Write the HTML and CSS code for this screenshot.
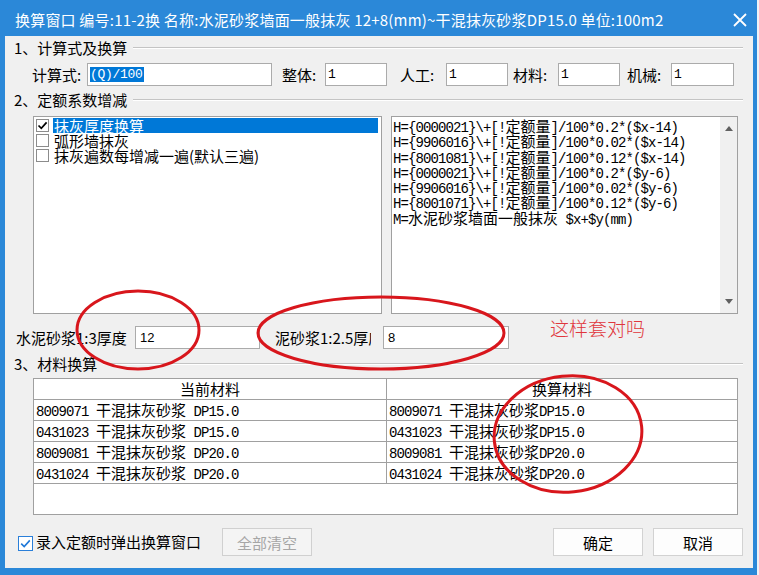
FILE: index.html
```html
<!DOCTYPE html>
<html lang="zh-CN">
<head>
<meta charset="utf-8">
<title>换算窗口</title>
<link rel="stylesheet" href="styles.css">
</head>
<body>
<div class="win">
  <div class="titlebar">
    <span class="title">换算窗口 编号:11-2换 名称:水泥砂浆墙面一般抹灰 12+8(mm)~干混抹灰砂浆DP15.0 单位:100m2</span>
    <svg class="close" viewBox="0 0 14 14" width="14" height="14"><path d="M1 1L13 13M13 1L1 13" stroke="#fff" stroke-width="1.8" fill="none"/></svg>
  </div>
  <div class="client">
    <div class="group"><span class="gtitle">1、计算式及换算</span><span class="gline"></span></div>
    <div class="row1">
      <span class="lbl l1">计算式:</span>
      <div class="edit e1"><span class="selected">(Q)/100</span></div>
      <span class="lbl l2">整体:</span>
      <div class="edit e2">1</div>
      <span class="lbl l3">人工:</span>
      <div class="edit e3">1</div>
      <span class="lbl l4">材料:</span>
      <div class="edit e4">1</div>
      <span class="lbl l5">机械:</span>
      <div class="edit e5">1</div>
    </div>
    <div class="group g2"><span class="gtitle">2、定额系数增减</span><span class="gline"></span></div>
    <div class="panes">
      <div class="listbox">
        <div class="item">
          <span class="cb"><svg viewBox="0 0 11 11" width="11" height="11"><path d="M1.5 5.5L4.3 8.3L9.6 2.4" stroke="#000" stroke-width="1.7" fill="none"/></svg></span>
          <span class="itxt hl">抹灰厚度换算</span>
        </div>
        <div class="item"><span class="cb"></span><span class="itxt">弧形墙抹灰</span></div>
        <div class="item"><span class="cb"></span><span class="itxt">抹灰遍数每增减一遍(默认三遍)</span></div>
      </div>
      <div class="memo">
        <div class="memotext">
          <div class="ml">H={0000021}\+[!<span class="cj">定额量</span>]/100*0.2*($x-14)</div>
          <div class="ml">H={9906016}\+[!<span class="cj">定额量</span>]/100*0.02*($x-14)</div>
          <div class="ml">H={8001081}\+[!<span class="cj">定额量</span>]/100*0.12*($x-14)</div>
          <div class="ml">H={0000021}\+[!<span class="cj">定额量</span>]/100*0.2*($y-6)</div>
          <div class="ml">H={9906016}\+[!<span class="cj">定额量</span>]/100*0.02*($y-6)</div>
          <div class="ml">H={8001071}\+[!<span class="cj">定额量</span>]/100*0.12*($y-6)</div>
          <div class="ml">M=<span class="cj">水泥砂浆墙面一般抹灰</span> $x+$y(mm)</div>
        </div>
        <div class="vscroll"><span class="arr-up"></span><span class="arr-down"></span></div>
      </div>
    </div>
    <div class="thick">
      <span class="lbl tl1">水泥砂浆1:3厚度</span>
      <div class="edit num te1">12</div>
      <span class="lbl tl2">泥砂浆1:2.5厚度</span>
      <div class="edit num te2">8</div>
    </div>
    <div class="group g3"><span class="gtitle">3、材料换算</span><span class="gline"></span></div>
    <div class="tbl">
      <div class="tr th"><div class="tc">当前材料</div><div class="tc tc2">换算材料</div></div>
      <div class="tr"><div class="tc mono">8009071 <span class="cj">干混抹灰砂浆</span> DP15.0</div><div class="tc tc2 mono">8009071 <span class="cj">干混抹灰砂浆</span>DP15.0</div></div>
      <div class="tr"><div class="tc mono">0431023 <span class="cj">干混抹灰砂浆</span> DP15.0</div><div class="tc tc2 mono">0431023 <span class="cj">干混抹灰砂浆</span>DP15.0</div></div>
      <div class="tr"><div class="tc mono">8009081 <span class="cj">干混抹灰砂浆</span> DP20.0</div><div class="tc tc2 mono">8009081 <span class="cj">干混抹灰砂浆</span>DP20.0</div></div>
      <div class="tr"><div class="tc mono">0431024 <span class="cj">干混抹灰砂浆</span> DP20.0</div><div class="tc tc2 mono">0431024 <span class="cj">干混抹灰砂浆</span>DP20.0</div></div>
    </div>
    <div class="bottom">
      <div class="chkwrap">
        <span class="chk"><svg viewBox="0 0 13 13" width="13" height="13"><path d="M2.2 6.6L5.2 9.5L10.8 3.4" stroke="#1f78d8" stroke-width="1.6" fill="none"/></svg></span>
        <span class="chklbl">录入定额时弹出换算窗口</span>
      </div>
      <div class="btn disabled">全部清空</div>
      <div class="spacer"></div>
      <div class="btn">确定</div>
      <div class="btn last">取消</div>
    </div>
  </div>
  <div class="overlay">
    <svg width="759" height="575" viewBox="0 0 759 575">
      <ellipse cx="138" cy="330" rx="61" ry="39" fill="none" stroke="#d8161c" stroke-width="3"/>
      <ellipse cx="381" cy="333" rx="123" ry="36" fill="none" stroke="#d8161c" stroke-width="3"/>
      <ellipse cx="568" cy="434" rx="74" ry="58" fill="none" stroke="#d8161c" stroke-width="3" transform="rotate(-6 568 434)"/>
    </svg>
    <div class="note">这样套对吗</div>
  </div>
</div>
</body>
</html>
```
FILE: styles.css
```css
* { box-sizing: border-box; }
html, body { margin: 0; padding: 0; }
body {
  width: 759px;
  height: 575px;
  overflow: hidden;
  background: #eef2f7;
  font-family: "Noto Sans CJK SC", sans-serif;
}
.win {
  position: relative;
  width: 757px;
  height: 575px;
  background: #2b88d8;
  padding: 0 4px 7px 5px;
  display: flex;
  flex-direction: column;
}
.titlebar {
  height: 36px;
  flex: none;
  display: flex;
  align-items: center;
  padding: 4px 6px 0 10px;
  color: #fff;
  font-size: 15px;
}
.title { flex: 1; white-space: nowrap; line-height: 20px; letter-spacing: 0.2px; }
.close { flex: none; }

.client {
  flex: 1;
  background: #f0f0f0;
  display: flex;
  flex-direction: column;
  font-size: 15px;
  color: #000;
}
.group {
  height: 24px;
  flex: none;
  display: flex;
  align-items: center;
  padding-left: 9px;
  margin-right: 10px;
}
.gtitle { white-space: nowrap; line-height: 20px; }
.gline {
  flex: 1;
  height: 2px;
  border-top: 1px solid #c4c4c4;
  border-bottom: 1px solid #ffffff;
  margin-left: 6px;
}
.g2 { margin-top: 2px; }
.g3 { margin-top: 3px; }

.lbl { flex: none; white-space: nowrap; line-height: 20px; }
.edit {
  flex: none;
  height: 23px;
  background: #fff;
  border: 1px solid #ababab;
  display: flex;
  align-items: center;
  padding-left: 2px;
  font-family: "Liberation Mono", monospace;
  font-size: 13px;
  letter-spacing: -0.3px;
}
.selected {
  background: #0078d7;
  color: #fff;
  line-height: 15px;
  padding-right: 1px;
}

.row1 {
  margin-top: 3px;
  height: 23px;
  flex: none;
  display: flex;
  align-items: center;
  padding-left: 27px;
}
.l1 { width: 55px; }
.e1 { width: 185px; }
.l2 { width: 43px; margin-left: 10px; }
.e2 { width: 62px; }
.l3 { width: 46px; margin-left: 13px; }
.e3 { width: 62px; }
.l4 { width: 45px; margin-left: 5px; }
.e4 { width: 62px; }
.l5 { width: 44px; margin-left: 7px; }
.e5 { width: 63px; }

.panes {
  margin-top: 4px;
  height: 198px;
  flex: none;
  display: flex;
  padding-left: 28px;
  gap: 9px;
}
.listbox {
  width: 349px;
  background: #fff;
  border: 1px solid #a0a0a0;
  padding: 1px 0 0 1px;
}
.item { height: 15px; display: flex; align-items: center; }
.cb {
  flex: none;
  width: 13px;
  height: 13px;
  margin-left: 1px;
  border: 1px solid #8c8c8c;
  background: #fff;
  display: flex;
  align-items: center;
  justify-content: center;
}
.itxt {
  margin-left: 4px;
  padding-left: 1px;
  height: 15px;
  line-height: 15px;
  white-space: nowrap;
}
.hl { flex: 1; margin-right: 3px; background: #0078d7; color: #fff; }

.memo {
  width: 347px;
  background: #fff;
  border: 1px solid #a0a0a0;
  display: flex;
}
.memotext {
  flex: 1;
  padding: 1px 0 0 1px;
  font-family: "Liberation Mono", monospace;
  font-size: 14px;
  letter-spacing: -0.9px;
}
.ml { height: 15.3px; line-height: 15.3px; white-space: pre; }
.cj { font-family: "Noto Sans CJK SC", sans-serif; font-size: 15px; letter-spacing: 0; }
.vscroll {
  width: 17px;
  flex: none;
  background: #f0f0f0;
  display: flex;
  flex-direction: column;
  justify-content: space-between;
  align-items: center;
  padding: 9px 0 9px;
}
.arr-up, .arr-down {
  width: 0;
  height: 0;
  border-left: 4.5px solid transparent;
  border-right: 4.5px solid transparent;
}
.arr-up { border-bottom: 5px solid #606060; }
.arr-down { border-top: 5px solid #606060; }

.thick {
  margin-top: 12px;
  height: 23px;
  flex: none;
  display: flex;
  align-items: center;
  padding-left: 11px;
}
.tl1 { width: 119px; }
.te1 { width: 125px; }
.tl2 { width: 96px; margin-left: 15px; overflow: hidden; }
.te2 { width: 126px; margin-left: 12px; }
.num { font-family: "Liberation Sans", sans-serif; font-size: 13px; letter-spacing: 0; padding-left: 4px; }

.tbl {
  margin-top: 2px;
  margin-left: 28px;
  width: 705px;
  height: 137px;
  flex: none;
  background: #fff;
  border: 1px solid #a0a0a0;
}
.tr { display: flex; height: 21px; border-bottom: 1px solid #a0a0a0; }
.tc {
  width: 353px;
  flex: none;
  border-right: 1px solid #a0a0a0;
  padding-left: 2px;
  line-height: 20px;
  white-space: nowrap;
  overflow: hidden;
}
.tc2 { flex: 1; border-right: none; }
.th .tc { text-align: center; padding-left: 0; }
.mono {
  font-family: "Liberation Mono", monospace;
  font-size: 14px;
  letter-spacing: -0.9px;
}

.bottom {
  margin-top: 13px;
  height: 28px;
  flex: none;
  display: flex;
  align-items: center;
  padding-left: 13px;
  padding-right: 10px;
}
.chkwrap { width: 204px; flex: none; display: flex; align-items: center; }
.chk {
  width: 15px;
  height: 15px;
  flex: none;
  border: 1px solid #2a7fd9;
  background: #fff;
  display: flex;
  align-items: center;
  justify-content: center;
  margin-top: 3px;
}
.chklbl { margin-left: 3px; white-space: nowrap; line-height: 20px; }
.btn {
  width: 90px;
  height: 28px;
  flex: none;
  background: #fdfdfd;
  border: 1px solid #d2d2d2;
  display: flex;
  align-items: center;
  justify-content: center;
  font-size: 15px;
}
.btn.disabled { background: #f4f4f4; color: #a6a6a6; border-color: #d0d0d0; }
.btn.last { margin-left: 10px; }
.spacer { flex: 1; }

.overlay {
  position: absolute;
  left: 0;
  top: 0;
  width: 759px;
  height: 575px;
  pointer-events: none;
}
.overlay svg { position: absolute; left: 0; top: 0; }
.note {
  position: absolute;
  left: 550px;
  top: 316px;
  font-size: 19px;
  line-height: 24px;
  color: #e0363c;
  font-weight: 300;
  white-space: nowrap;
}
```
